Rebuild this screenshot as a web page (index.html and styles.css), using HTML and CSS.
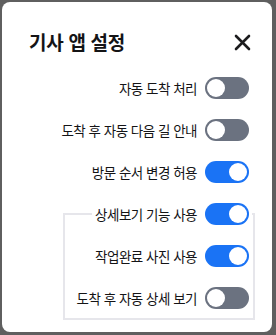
FILE: index.html
```html
<!DOCTYPE html>
<html lang="ko">
<head>
<meta charset="utf-8">
<title>기사 앱 설정</title>
<link rel="stylesheet" href="styles.css">
</head>
<body>
<div class="dialog">
  <div class="dialog-head">
    <h1 class="dialog-title">기사 앱 설정</h1>
    <button type="button" class="close-btn" aria-label="닫기">
      <svg width="17" height="17" viewBox="0 0 17 17"><path d="M2 2 L15 15 M15 2 L2 15" stroke="#1c1c1e" stroke-width="2.6" stroke-linecap="round" fill="none"/></svg>
    </button>
  </div>

  <div class="rows">
    <label class="row">
      <span class="row-label">자동 도착 처리</span>
      <input type="checkbox" class="toggle-input">
      <span class="toggle"></span>
    </label>
    <label class="row">
      <span class="row-label">도착 후 자동 다음 길 안내</span>
      <input type="checkbox" class="toggle-input">
      <span class="toggle"></span>
    </label>
    <label class="row">
      <span class="row-label">방문 순서 변경 허용</span>
      <input type="checkbox" class="toggle-input" checked>
      <span class="toggle"></span>
    </label>
  </div>

  <fieldset class="group">
    <legend class="group-legend">
      <label class="row">
        <span class="row-label">상세보기 기능 사용</span>
        <input type="checkbox" class="toggle-input" checked>
        <span class="toggle"></span>
      </label>
    </legend>
    <label class="row row-sub">
      <span class="row-label">작업완료 사진 사용</span>
      <input type="checkbox" class="toggle-input" checked>
      <span class="toggle"></span>
    </label>
    <label class="row row-sub">
      <span class="row-label">도착 후 자동 상세 보기</span>
      <input type="checkbox" class="toggle-input">
      <span class="toggle"></span>
    </label>
  </fieldset>
</div>
</body>
</html>
```

FILE: styles.css
```css
html, body {
  margin: 0;
  padding: 0;
}

body {
  background: #5f5f5f;
  font-family: "Noto Sans CJK KR", "Noto Sans", sans-serif;
  color: #141416;
  padding: 2px 4px 3px 2px;
}

.dialog {
  box-sizing: border-box;
  width: 270px;
  height: 330px;
  background: #fff;
  border-radius: 8px;
  padding: 25px 17px 13px 27px;
}

.dialog-head {
  display: flex;
  align-items: center;
  justify-content: space-between;
  height: 30px;
  padding-right: 4px;
  margin-bottom: 10px;
}

.dialog-title {
  margin: 0;
  font-size: 19px;
  letter-spacing: -0.3px;
  font-weight: 700;
  line-height: 30px;
}

.close-btn {
  border: 0;
  background: none;
  padding: 0;
  width: 17px;
  height: 17px;
  cursor: pointer;
  display: flex;
}

.rows {
  padding-right: 6px;
}

.row {
  display: flex;
  align-items: center;
  justify-content: flex-end;
  height: 42px;
  cursor: pointer;
}

.row-label {
  font-size: 13.5px;
  letter-spacing: -0.5px;
  margin-right: 8px;
  white-space: nowrap;
}

.toggle-input {
  display: none;
}

.toggle {
  position: relative;
  width: 44px;
  height: 22px;
  border-radius: 11px;
  background: #6b7280;
  flex: none;
  transition: .2s;
}

.toggle:before {
  content: "";
  position: absolute;
  top: 2px;
  left: 2px;
  width: 18px;
  height: 18px;
  border-radius: 50%;
  background: #fff;
  transition: .2s;
}

.toggle-input:checked + .toggle {
  background: #1a73f5;
}

.toggle-input:checked + .toggle:before {
  transform: translateX(22px);
}

.group {
  margin: 0 0 0 34px;
  border: 2px solid #e6e6eb;
  padding: 1px 4px 0 0;
  display: flex;
  flex-direction: column;
  gap: 2px;
}

.group-legend {
  margin-left: auto;
  margin-right: -3px;
  padding: 0 3px;
}

.row-sub {
  height: 40px;
}
```
